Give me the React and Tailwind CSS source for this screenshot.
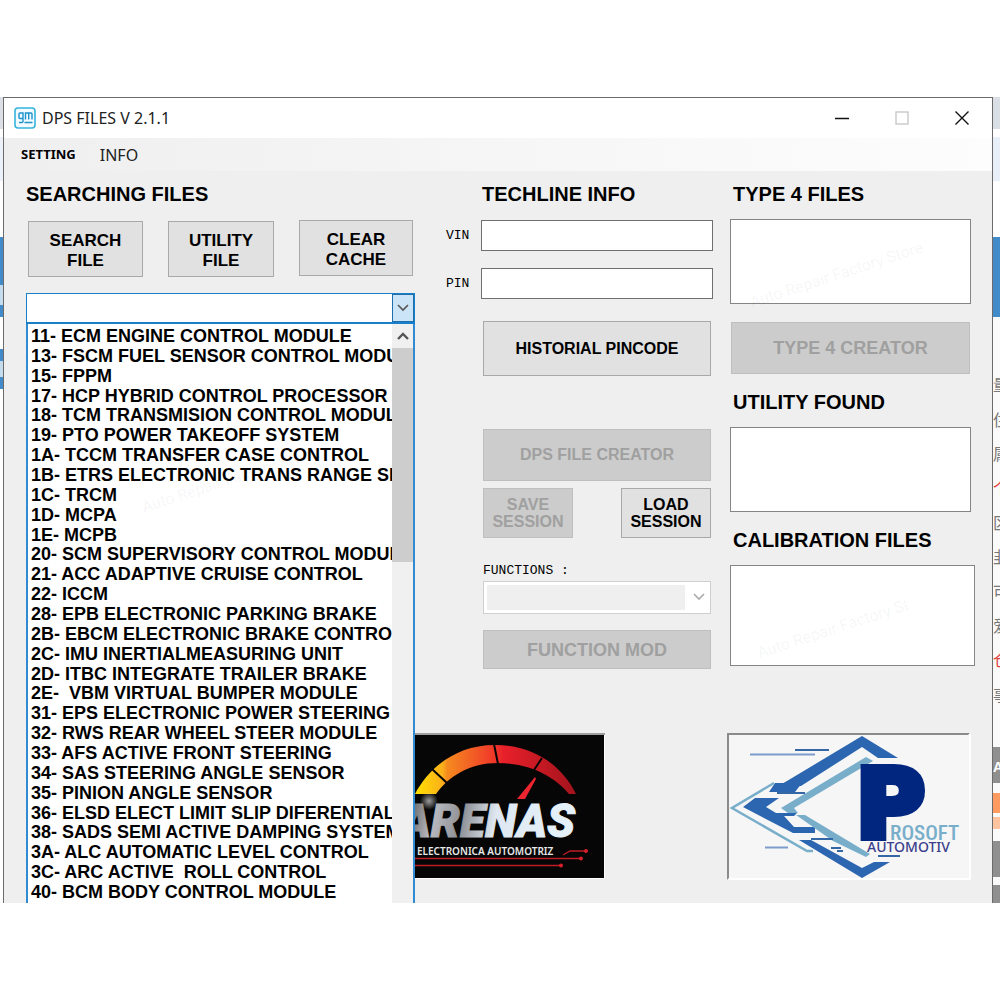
import { useState } from "react";

const MODULES = [
  "11- ECM ENGINE CONTROL MODULE",
  "13- FSCM FUEL SENSOR CONTROL MODULE",
  "15- FPPM",
  "17- HCP HYBRID CONTROL PROCESSOR",
  "18- TCM TRANSMISION CONTROL MODULE",
  "19- PTO POWER TAKEOFF SYSTEM",
  "1A- TCCM TRANSFER CASE CONTROL",
  "1B- ETRS ELECTRONIC TRANS RANGE SELECTOR",
  "1C- TRCM",
  "1D- MCPA",
  "1E- MCPB",
  "20- SCM SUPERVISORY CONTROL MODULE",
  "21- ACC ADAPTIVE CRUISE CONTROL",
  "22- ICCM",
  "28- EPB ELECTRONIC PARKING BRAKE",
  "2B- EBCM ELECTRONIC BRAKE CONTROL",
  "2C- IMU INERTIALMEASURING UNIT",
  "2D- ITBC INTEGRATE TRAILER BRAKE",
  "2E-  VBM VIRTUAL BUMPER MODULE",
  "31- EPS ELECTRONIC POWER STEERING",
  "32- RWS REAR WHEEL STEER MODULE",
  "33- AFS ACTIVE FRONT STEERING",
  "34- SAS STEERING ANGLE SENSOR",
  "35- PINION ANGLE SENSOR",
  "36- ELSD ELECT LIMIT SLIP DIFERENTIAL",
  "38- SADS SEMI ACTIVE DAMPING SYSTEM",
  "3A- ALC AUTOMATIC LEVEL CONTROL",
  "3C- ARC ACTIVE  ROLL CONTROL",
  "40- BCM BODY CONTROL MODULE",
];

function WinButton({ className = "", disabled, children }) {
  return (
    <button
      disabled={disabled}
      className={`border font-bold ${
        disabled
          ? "border-[#bfbfbf] bg-[#cccccc] text-[#a0a0a0]"
          : "border-[#a9a9a9] bg-[#e1e1e1] text-black"
      } ${className}`}
    >
      {children}
    </button>
  );
}

function Heading({ children }) {
  return <h2 className="text-xl leading-6 font-bold whitespace-nowrap">{children}</h2>;
}

function Chevron({ up, className }) {
  return (
    <svg viewBox="0 0 12 8" className={`h-2 w-3 ${className}`} fill="none" stroke="currentColor">
      <path d={up ? "M1 7 6 2l5 5" : "M1 1l5 5 5-5"} strokeWidth={up ? 2.4 : 1.6} />
    </svg>
  );
}

function Watermark({ className, children = "Auto Repair Factory Store" }) {
  return (
    <span
      aria-hidden="true"
      className={`pointer-events-none absolute -rotate-18 font-['Roboto',sans-serif] text-base whitespace-nowrap ${className}`}
    >
      {children}
    </span>
  );
}

function GmLogo() {
  return (
    <svg viewBox="0 0 22 22" className="size-[22px]">
      <rect x="1" y="1" width="20" height="20" rx="3" fill="#f2fbff" stroke="#35b5dd" strokeWidth="1.6" />
      <g fill="none" stroke="#1f93cc" strokeWidth="1.4">
        <path d="M9 11.500H6a1 1 0 0 1-1-1V7a1 1 0 0 1 1-1h3v8.500a1 1 0 0 1-1 1H5" />
        <path d="M11.500 12.500V6H17a1 1 0 0 1 1 1v5.500M14.700 6v6.500M10.500 15.500h8" />
      </g>
    </svg>
  );
}

function ArenasLogo() {
  return (
    <svg viewBox="0 0 190 146" className="block w-[190px]" role="img" aria-label="Arenas">
      <defs>
        <linearGradient id="gauge" gradientUnits="userSpaceOnUse" x1="0" x2="161" y1="0" y2="0">
          <stop offset="0" stopColor="#ffe000" />
          <stop offset="0.17" stopColor="#fbb01a" />
          <stop offset="0.2" stopColor="#f58a1f" />
          <stop offset="0.5" stopColor="#f0352a" />
          <stop offset="0.55" stopColor="#e8202a" />
          <stop offset="1" stopColor="#a3131c" />
        </linearGradient>
        <linearGradient id="steel" gradientUnits="userSpaceOnUse" x1="0" x2="161" y1="70" y2="100">
          <stop offset="0" stopColor="#6f7175" />
          <stop offset="0.12" stopColor="#b9bbc0" />
          <stop offset="0.3" stopColor="#8d8f95" />
          <stop offset="0.5" stopColor="#dfe8f2" />
          <stop offset="1" stopColor="#e6f2fa" />
        </linearGradient>
        <radialGradient id="flare">
          <stop offset="0" stopColor="#fff" stopOpacity="0.6" />
          <stop offset="1" stopColor="#fff" stopOpacity="0" />
        </radialGradient>
      </defs>
      <rect width="190" height="146" fill="#9d9d9d" />
      <rect y="2" width="190" height="144" fill="#fff" />
      <rect y="2" width="189" height="143" fill="#060606" />
      <path
        d="M0 61C12 38 38 12 80 12c40 0 68 22 81 49h-7C142 46 118 30 83 30 55 30 34 43 21 61Z"
        fill="url(#gauge)"
      />
      <path d="m17 36 15 14M79 11l4 20M127 25l-8 12" stroke="#060606" strokeWidth="2" />
      <path d="m120 44 1 2-11 20h-8Z" fill="#ee2430" />
      <text
        x="160"
        y="104"
        textAnchor="end"
        fill="url(#steel)"
        stroke="url(#steel)"
        strokeWidth="1"
        className="font-['Roboto',sans-serif] text-[46px] font-black italic"
      >
        ARENAS
      </text>
      <circle cx="14" cy="68" r="9" fill="url(#flare)" />
      <text x="2" y="122" fill="#e8e8e8" className="font-['Noto_Sans',sans-serif] text-[10px] font-semibold">
        ELECTRONICA AUTOMOTRIZ
      </text>
      <g fill="none" stroke="#c01c26" strokeWidth="1.300">
        <path d="M0 125.500h166M0 132.500h146M148 122l7-4h16" />
      </g>
      <g fill="#d8202c">
        <circle cx="166" cy="125.500" r="2" />
        <circle cx="146" cy="132.500" r="2" />
        <circle cx="171" cy="118" r="2" />
      </g>
    </svg>
  );
}

function ProsoftLogo() {
  return (
    <svg viewBox="0 0 244 147" className="block w-full max-w-[244px]" role="img" aria-label="Prosoft Automotiv">
      <rect width="244" height="147" fill="#fff" />
      <path d="M0 147V0h243l-2 2H2v143Z" fill="#8b8b8b" />
      <rect x="2" y="2" width="240" height="143" fill="#f6f6f6" />
      <g fill="#2c66b0">
        <path d="M135 3 171 25H151L135 14 74 53H51L60 48Z" />
        <path d="M48 50H75L68 59H42Z" />
        <path d="M16 74 28 65H52L39 74 49 80H70L67 83H57L67 94H88V100H66Z" />
        <path d="M72 107H84L135 135 147 129H163L135 145Z" />
      </g>
      <g fill="#79aecb">
        <path d="M139 24 146 28 67 75 71 80H61L54 75Z" />
        <path d="M69 82H78L143 121 139 124 106 108Z" />
      </g>
      <path d="M47 50 5 75 80 118H86" fill="none" stroke="#79aecb" strokeWidth="2.500" />
      <path d="M68 17h34M151 123h22M104 115h10M110 118h6M50 60h28M84 106h22" stroke="#3467a6" strokeWidth="2" />
      <path d="M23 21.500h65M38 114.500h23" stroke="#7d9ccc" strokeWidth="1.800" />
      <text
        x="129"
        y="104"
        fill="#00267f"
        stroke="#00267f"
        strokeWidth="8"
        className="font-['DejaVu_Sans',sans-serif] text-[94px] font-bold"
      >
        P
      </text>
      <text x="163" y="107" fill="#79aecb" className="font-['Roboto_Condensed',sans-serif] text-[21px] font-medium">
        ROSOFT
      </text>
      <text x="140" y="119" fill="#3a3f8c" className="font-['Noto_Sans',sans-serif] text-[14px] font-medium">
        AUTOMOTIV
      </text>
    </svg>
  );
}

// Slivers of the page that stays visible behind the window
function LeftBackdrop() {
  return (
    <div className="flex w-[3px] shrink-0 flex-col overflow-hidden bg-white" aria-hidden="true">
      <div className="h-8 bg-[#dcdfe6]" />
      <div className="h-2 bg-white" />
      <div className="h-11 bg-[#edf2fa]" />
      <div className="mt-14 h-12 bg-[#428bca]" />
      <div className="h-5 bg-[#c5dcef]" />
      <div className="h-3 bg-[#428bca]" />
      <div className="mt-8 h-3 bg-[#428bca]" />
      <div className="h-4 bg-[#c5dcef]" />
      <div className="h-3 bg-[#428bca]" />
    </div>
  );
}

function RightBackdrop() {
  const glyphs = ["量", "住", "属", "个", "区", "韭", "可", "爱", "仓", "事"];
  return (
    <div className="flex w-[7px] shrink-0 flex-col overflow-hidden bg-[#fafafa]" aria-hidden="true">
      <div className="h-8 shrink-0 bg-[#dadee5]" />
      <div className="h-2 shrink-0 bg-white" />
      <div className="h-11 shrink-0 bg-[#e8eff9]" />
      <div className="h-14 shrink-0 bg-white" />
      <div className="h-20 shrink-0 bg-[#428bca]" />
      <div className="mt-[50px] flex h-[344px] shrink-0 flex-col justify-around font-['Noto_Sans_CJK_SC',sans-serif] text-base leading-4">
        {glyphs.map((g) => (
          <span key={g} className={g === "个" || g === "仓" ? "text-[#e0403c]" : "text-[#777]"}>
            {g}
          </span>
        ))}
      </div>
      <div className="mt-9 h-9 shrink-0 bg-[#8f8f8f] text-sm leading-10 font-bold text-white">A</div>
      <div className="mt-2.5 h-5 shrink-0 bg-[#ff9a60]" />
      <div className="mt-1 h-3 shrink-0 bg-[#ffc3a0]" />
      <div className="mt-3 h-9 shrink-0 bg-[#8f8f8f]" />
      <div className="mt-2 flex-1 bg-[#8f8f8f]" />
    </div>
  );
}

function TitleBar() {
  return (
    <header className="flex h-10 items-center bg-white pl-2.5">
      <GmLogo />
      <h1 className="ml-1.5 flex-1 font-['Noto_Sans',sans-serif] text-base text-[#222]">DPS FILES V 2.1.1</h1>
      <button aria-label="Minimize" className="flex h-full w-[60px] items-center justify-center">
        <svg viewBox="0 0 14 14" className="size-3.5" stroke="#111" strokeWidth="1.500">
          <path d="M0 7.500h14" />
        </svg>
      </button>
      <button aria-label="Maximize" disabled className="flex h-full w-[60px] items-center justify-center">
        <svg viewBox="0 0 14 14" className="size-3.5" fill="none" stroke="#c8c8c8" strokeWidth="1.400">
          <rect x="1" y="1" width="12" height="12" />
        </svg>
      </button>
      <button aria-label="Close" className="flex h-full w-[60px] items-center justify-center">
        <svg viewBox="0 0 14 14" className="size-3.5" fill="none" stroke="#111" strokeWidth="1.400">
          <path d="m.5.5 13 13m0-13-13 13" />
        </svg>
      </button>
    </header>
  );
}

function SearchPanel() {
  const [module, setModule] = useState("");

  return (
    <section className="flex min-w-0 flex-col">
      <Heading>SEARCHING FILES</Heading>
      <div className="mt-3.5 flex items-start justify-between px-0.5 text-[17px] leading-5">
        <WinButton className="mt-px h-14 w-[115px] px-4 pt-1">SEARCH FILE</WinButton>
        <WinButton className="mt-px h-14 w-[106px] px-4 pt-1">UTILITY FILE</WinButton>
        <WinButton className="h-14 w-[114px] px-4 pt-1">CLEAR CACHE</WinButton>
      </div>

      <div className="mt-4 flex h-[31px] border border-b-2 border-[#1a7fc9] bg-white">
        <select
          aria-label="Module"
          value={module}
          onChange={(e) => setModule(e.target.value)}
          className="w-full min-w-0 flex-1 appearance-none bg-transparent px-1 font-bold outline-none"
        >
          <option value="" />
          {MODULES.map((m) => (
            <option key={m}>{m}</option>
          ))}
        </select>
        <span className="pointer-events-none flex w-[22px] items-center justify-center border border-[#1f6fae] bg-[#cce4f7]">
          <Chevron className="text-[#555]" />
        </span>
      </div>

      <div className="relative flex flex-1 overflow-hidden border-x-2 border-[#2f8bd3] bg-white">
        <ul
          role="listbox"
          aria-label="Modules"
          className="flex min-w-0 flex-1 flex-col overflow-hidden pt-[3px] pl-[3px] text-lg leading-[19px] font-bold"
        >
          {MODULES.map((m) => (
            <li
              key={m}
              role="option"
              aria-selected={m === module}
              onClick={() => setModule(m)}
              className="flex-1 whitespace-pre"
            >
              {m}
            </li>
          ))}
        </ul>
        <div className="flex w-[21px] flex-col bg-[#f0f0f0]">
          <button aria-label="Scroll up" className="flex h-6 items-center justify-center">
            <Chevron up className="text-[#555]" />
          </button>
          <div className="h-[214px] bg-[#cdcdcd]" />
        </div>
        <Watermark className="top-[144px] left-[110px] text-black/5" />
      </div>
    </section>
  );
}

function TechlinePanel() {
  return (
    <section className="flex min-w-0 flex-col">
      <div className="pl-[67px]">
        <Heading>TECHLINE INFO</Heading>
      </div>

      <div className="mt-3.5 flex flex-col gap-[17px] pr-3.5 pl-[31px]">
        {["VIN", "PIN"].map((name) => (
          <div key={name} className="flex items-center">
            <label htmlFor={name} className="w-[35px] font-['Liberation_Mono',monospace] text-[13px]">
              {name}
            </label>
            <input id={name} className="h-[31px] min-w-0 flex-1 border border-[#6f6f6f] bg-white px-1" />
          </div>
        ))}
      </div>

      <div className="flex flex-col pr-4 pl-[68px]">
        <WinButton className="mt-[22px] h-[55px]">HISTORIAL PINCODE</WinButton>
        <WinButton disabled className="mt-[53px] h-[52px]">
          DPS FILE CREATOR
        </WinButton>
        <div className="mt-[7px] flex justify-between leading-[17px]">
          <WinButton disabled className="h-[50px] w-[90px]">
            SAVE SESSION
          </WinButton>
          <WinButton className="h-[50px] w-[90px]">LOAD SESSION</WinButton>
        </div>

        <label htmlFor="functions" className="mt-[23px] font-['Liberation_Mono',monospace] text-[13px] leading-5">
          FUNCTIONS :
        </label>
        <div className="relative flex">
          <select
            id="functions"
            disabled
            className="h-[33px] w-full appearance-none border border-[#cfcfcf] bg-[#efefef] shadow-[inset_0_0_0_3px_#fff,inset_-25px_0_0_0_#fff]"
          />
          <Chevron className="pointer-events-none absolute top-3 right-1.5 text-[#aaa]" />
        </div>
        <WinButton disabled className="mt-4 h-[39px] text-lg">
          FUNCTION MOD
        </WinButton>
      </div>

      <div className="mt-16">
        <ArenasLogo />
      </div>
    </section>
  );
}

function FilesPanel() {
  return (
    <section className="flex min-w-0 flex-col">
      <div className="flex flex-col pl-[3px]">
        <div className="pl-[3px]">
          <Heading>TYPE 4 FILES</Heading>
        </div>
        <div className="relative mt-[13px] mr-1 flex flex-col">
          <textarea
            aria-label="Type 4 files"
            className="h-[85px] resize-none border border-[#858585] bg-white"
          />
          <Watermark className="top-11 left-4 text-black/5" />
        </div>
        <WinButton disabled className="mt-[18px] mr-[5px] ml-px h-[52px] text-lg">
          TYPE 4 CREATOR
        </WinButton>

        <div className="mt-4 pl-[3px]">
          <Heading>UTILITY FOUND</Heading>
        </div>
        <textarea
          aria-label="Utility found"
          className="mt-[13px] mr-1 h-[85px] resize-none border border-[#858585] bg-white"
        />

        <div className="mt-4 pl-[3px]">
          <Heading>CALIBRATION FILES</Heading>
        </div>
        <div className="relative mt-[13px] flex flex-col">
          <textarea
            aria-label="Calibration files"
            className="h-[101px] resize-none border border-[#858585] bg-white"
          />
          <Watermark className="top-13 left-6 text-black/5">Auto Repair Factory St</Watermark>
        </div>
      </div>

      <div className="mt-[67px]">
        <ProsoftLogo />
      </div>
    </section>
  );
}

export default function App() {
  return (
    <div className="min-h-screen bg-white py-[97px] font-['Liberation_Sans',Arial,sans-serif] text-black">
      <div className="flex overflow-hidden">
        <LeftBackdrop />
        <div className="flex min-w-0 flex-1 flex-col border-x border-t border-[#6b6b6b] bg-[#efefef]">
          <TitleBar />
          <nav className="flex h-[33px] items-center gap-6 bg-linear-to-r from-[#efefef] to-[#fdfdfd] pl-[17px] font-['Noto_Sans',sans-serif]">
            <button className="text-[13px] font-bold">SETTING</button>
            <button className="text-base text-[#222]">INFO</button>
          </nav>
          <main className="grid min-h-[732px] grid-cols-[389fr_312fr_248fr] pt-[11px] pr-[17px] pl-[22px]">
            <SearchPanel />
            <TechlinePanel />
            <FilesPanel />
          </main>
        </div>
        <RightBackdrop />
      </div>
    </div>
  );
}
